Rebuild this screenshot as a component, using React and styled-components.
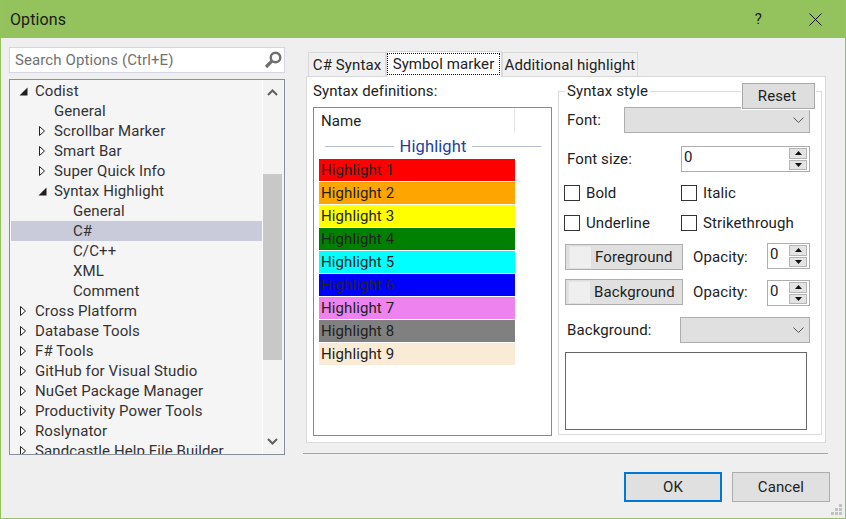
import React from 'react';
import styled, { createGlobalStyle } from 'styled-components';

const GlobalStyle = createGlobalStyle`
  html, body { margin: 0; padding: 0; background: #efefef; }
  * { box-sizing: border-box; }
`;

const treeItems = [
  { label: 'Codist', level: 0, arrow: 'open' },
  { label: 'General', level: 1 },
  { label: 'Scrollbar Marker', level: 1, arrow: 'closed' },
  { label: 'Smart Bar', level: 1, arrow: 'closed' },
  { label: 'Super Quick Info', level: 1, arrow: 'closed' },
  { label: 'Syntax Highlight', level: 1, arrow: 'open' },
  { label: 'General', level: 2 },
  { label: 'C#', level: 2, selected: true },
  { label: 'C/C++', level: 2 },
  { label: 'XML', level: 2 },
  { label: 'Comment', level: 2 },
  { label: 'Cross Platform', level: 0, arrow: 'closed' },
  { label: 'Database Tools', level: 0, arrow: 'closed' },
  { label: 'F# Tools', level: 0, arrow: 'closed' },
  { label: 'GitHub for Visual Studio', level: 0, arrow: 'closed' },
  { label: 'NuGet Package Manager', level: 0, arrow: 'closed' },
  { label: 'Productivity Power Tools', level: 0, arrow: 'closed' },
  { label: 'Roslynator', level: 0, arrow: 'closed' },
  { label: 'Sandcastle Help File Builder', level: 0, arrow: 'closed' },
];

const highlights = [
  ['Highlight 1', '#ff0000'],
  ['Highlight 2', '#ffa500'],
  ['Highlight 3', '#ffff00'],
  ['Highlight 4', '#008000'],
  ['Highlight 5', '#00ffff'],
  ['Highlight 6', '#0000ff'],
  ['Highlight 7', '#ee82ee'],
  ['Highlight 8', '#808080'],
  ['Highlight 9', '#faebd7'],
];

const TreeArrow = ({ type }) => {
  if (type === 'open') {
    return (
      <ArrowSlot>
        <svg width="9" height="9" viewBox="0 0 9 9"><path d="M8.5 0.5V8.5H0.5Z" fill="#1e1e1e" /></svg>
      </ArrowSlot>
    );
  }
  if (type === 'closed') {
    return (
      <ArrowSlot>
        <svg width="9" height="12" viewBox="0 0 9 12"><path d="M1.5 1.5L6.5 6L1.5 10.5Z" fill="#fff" stroke="#222" /></svg>
      </ArrowSlot>
    );
  }
  return <ArrowSlot />;
};

const Chevron = ({ up }) => (
  <svg width="11" height="7" viewBox="0 0 11 7">
    <path d={up ? 'M1 6L5.5 1.5L10 6' : 'M1 1L5.5 5.5L10 1'} fill="none" stroke="#5f5f5f" strokeWidth="2" />
  </svg>
);

const SelectBox = ({ width }) => (
  <Select $width={width}>
    <svg width="11" height="6" viewBox="0 0 11 6">
      <path d="M0.5 0.5L5.5 5.5L10.5 0.5" fill="none" stroke="#555" />
    </svg>
  </Select>
);

const Spinner = ({ width, shift }) => (
  <SpinInput $width={width} $shift={shift}>
    <SpinValue>0</SpinValue>
    <SpinButtons>
      <SpinButton>
        <svg width="7" height="4" viewBox="0 0 7 4"><path d="M0 4L3.5 0L7 4Z" fill="#111" /></svg>
      </SpinButton>
      <SpinButton>
        <svg width="7" height="4" viewBox="0 0 7 4"><path d="M0 0L3.5 4L7 0Z" fill="#111" /></svg>
      </SpinButton>
    </SpinButtons>
  </SpinInput>
);

const App = () => (
  <Window>
    <GlobalStyle />
    <TitleBar>
      <TitleText>Options</TitleText>
      <TitleButtons>
        <HelpGlyph>?</HelpGlyph>
        <svg width="13" height="13" viewBox="0 0 13 13">
          <path d="M0.5 0.5L12.5 12.5M12.5 0.5L0.5 12.5" stroke="#111" strokeWidth="1" />
        </svg>
      </TitleButtons>
    </TitleBar>
    <Main>
      <LeftColumn>
        <SearchBox>
          <SearchHint>Search Options (Ctrl+E)</SearchHint>
          <svg width="18" height="18" viewBox="0 0 18 18">
            <circle cx="11.5" cy="6.5" r="4.8" fill="none" stroke="#6f6f6f" strokeWidth="2.4" />
            <path d="M7.8 10.2L2 16" stroke="#6f6f6f" strokeWidth="3.2" />
          </svg>
        </SearchBox>
        <Tree>
          <TreeList>
            {treeItems.map((item, i) => (
              <TreeRow key={i} $level={item.level} $selected={item.selected}>
                <TreeArrow type={item.arrow} />
                {item.label}
              </TreeRow>
            ))}
          </TreeList>
          <ScrollBar>
            <ScrollCap $top><Chevron up /></ScrollCap>
            <ScrollThumb />
            <ScrollCap><Chevron /></ScrollCap>
          </ScrollBar>
        </Tree>
      </LeftColumn>

      <RightColumn>
        <Tabs>
          <Tab $width={78}>C# Syntax</Tab>
          <ActiveTab>
            <FocusRect>Symbol marker</FocusRect>
          </ActiveTab>
          <Tab $width={136}>Additional highlight</Tab>
        </Tabs>
        <Panel>
          <DefinitionsColumn>
            <PanelLabel>Syntax definitions:</PanelLabel>
            <ListBox>
              <ListHeader>
                <HeaderCell>Name</HeaderCell>
              </ListHeader>
              <GroupHeader>
                <GroupLine />
                <GroupName>Highlight</GroupName>
                <GroupLine />
              </GroupHeader>
              {highlights.map(([name, color]) => (
                <HighlightRow key={name} $color={color}>{name}</HighlightRow>
              ))}
            </ListBox>
          </DefinitionsColumn>

          <StyleColumn>
            <ResetButton>Reset</ResetButton>
            <StyleGroup>
              <GroupLegend>Syntax style</GroupLegend>
              <FieldRow $top={6}>
                <FieldLabel>Font:</FieldLabel>
                <SelectBox width={186} />
              </FieldRow>
              <FieldRow $top={13}>
                <FieldLabel>Font size:</FieldLabel>
                <Spinner width={129} />
              </FieldRow>
              <CheckGrid>
                <CheckItem><CheckBox />Bold</CheckItem>
                <CheckItem><CheckBox />Italic</CheckItem>
                <CheckItem><CheckBox />Underline</CheckItem>
                <CheckItem><CheckBox />Strikethrough</CheckItem>
              </CheckGrid>
              <ColorRow $top={11}>
                <ColorButton $inset={3}>
                  <Swatch $width={22} />
                  Foreground
                </ColorButton>
                <OpacityLabel>Opacity:</OpacityLabel>
                <Spinner width={43} shift={-1} />
              </ColorRow>
              <ColorRow $top={9}>
                <ColorButton $inset={2}>
                  <Swatch $width={22} />
                  Background
                </ColorButton>
                <OpacityLabel>Opacity:</OpacityLabel>
                <Spinner width={43} shift={1} />
              </ColorRow>
              <FieldRow $top={12}>
                <FieldLabel>Background:</FieldLabel>
                <SelectBox width={130} />
              </FieldRow>
              <PreviewBox />
            </StyleGroup>
          </StyleColumn>
        </Panel>
        <Separator />
        <Actions>
          <DialogButton $primary>OK</DialogButton>
          <DialogButton>Cancel</DialogButton>
        </Actions>
      </RightColumn>
    </Main>
    <ResizeGrip width="11" height="11" viewBox="0 0 11 11">
      <path d="M8 0h3v3H8zM4 4h3v3H4zM8 4h3v3H8zM0 8h3v3H0zM4 8h3v3H4zM8 8h3v3H8z" fill="#c2c2c2" />
    </ResizeGrip>
  </Window>
);

const Window = styled.div`
  position: relative;
  width: 846px;
  height: 519px;
  display: flex;
  flex-direction: column;
  background: #efefef;
  border: 1px solid #94c45c;
  border-top: 0;
  overflow: hidden;
  font-family: Roboto, "Liberation Sans", sans-serif;
  font-size: 15px;
  letter-spacing: 0.1px;
  color: #222;
`;

const TitleBar = styled.div`
  height: 38px;
  flex: none;
  margin: 0 -1px;
  padding: 0 24px 0 10px;
  display: flex;
  align-items: center;
  justify-content: space-between;
  background: #94c25c;
`;

const TitleText = styled.div`
  font-size: 16px;
  color: #1a1a1a;
`;

const TitleButtons = styled.div`
  display: flex;
  align-items: center;
  gap: 47px;
`;

const HelpGlyph = styled.span`
  font-size: 15px;
  color: #1a1a1a;
`;

const Main = styled.div`
  flex: 1;
  display: flex;
  padding: 9px 0 0 8px;
`;

const LeftColumn = styled.div`
  width: 276px;
  flex: none;
`;

const SearchBox = styled.div`
  height: 26px;
  display: flex;
  align-items: center;
  justify-content: space-between;
  padding: 0 2px 0 5px;
  background: #fff;
  border: 1px solid #d5d5e4;
`;

const SearchHint = styled.span`
  color: #717171;
`;

const Tree = styled.div`
  height: 376px;
  margin-top: 6px;
  display: flex;
  background: #f5f5f5;
  border: 1px solid #8a8f9c;
  overflow: hidden;
`;

const TreeList = styled.div`
  flex: 1;
  padding: 1px 0 0 1px;
  min-width: 0;
`;

const TreeRow = styled.div`
  height: 20px;
  display: flex;
  align-items: center;
  padding-left: ${p => 8 + p.$level * 19}px;
  white-space: nowrap;
  color: #333;
  background: ${p => (p.$selected ? '#c9cbdb' : 'transparent')};
`;

const ArrowSlot = styled.span`
  width: 16px;
  flex: none;
  display: flex;
  align-items: center;
`;

const ScrollBar = styled.div`
  width: 22px;
  flex: none;
  display: flex;
  flex-direction: column;
  border-left: 1px solid #fbfbfb;
  background: #f3f3f3;
`;

const ScrollCap = styled.div`
  height: ${p => (p.$top ? '24px' : '26px')};
  display: flex;
  align-items: center;
  justify-content: center;
  padding-right: 2px;
  margin-top: ${p => (p.$top ? '0' : 'auto')};
`;

const ScrollThumb = styled.div`
  height: 186px;
  width: 19px;
  margin-top: 70px;
  background: #c8c8c8;
`;

const RightColumn = styled.div`
  width: 527px;
  margin-left: 18px;
  padding-top: 4px;
`;

const Tabs = styled.div`
  height: 26px;
  margin-left: 3px;
  padding-left: 2px;
  display: flex;
  align-items: flex-end;
  position: relative;
  z-index: 1;
`;

const Tab = styled.div`
  width: ${p => p.$width}px;
  height: 24px;
  margin-bottom: 1px;
  display: flex;
  align-items: center;
  justify-content: center;
  background: #f0f0f0;
  border: 1px solid #d9d9d9;
  border-bottom: 0;
  color: #222;
`;

const ActiveTab = styled.div`
  width: 116px;
  height: 26px;
  padding: 1px 1px 0 0;
  background: #fff;
  border: 1px solid #d9d9d9;
  border-bottom: 0;
`;

const FocusRect = styled.div`
  height: 22px;
  display: flex;
  align-items: center;
  justify-content: center;
  border: 1px dotted #111;
  color: #222;
`;

const Panel = styled.div`
  height: 367px;
  width: 520px;
  margin: -1px 0 0 3px;
  padding: 4px 4px 0 6px;
  display: flex;
  gap: 6px;
  background: #fff;
  border: 1px solid #d9d9d9;
`;

const DefinitionsColumn = styled.div`
  width: 239px;
  flex: none;
`;

const PanelLabel = styled.div`
  height: 20px;
  line-height: 20px;
  color: #222;
`;

const ListBox = styled.div`
  height: 329px;
  margin-top: 6px;
  padding: 0 5px;
  border: 1px solid #858a94;
  background: #fff;
`;

const ListHeader = styled.div`
  height: 25px;
  display: flex;
`;

const HeaderCell = styled.div`
  width: 196px;
  padding-left: 2px;
  display: flex;
  align-items: center;
  border-right: 1px solid #e6e6e6;
  color: #222;
`;

const GroupHeader = styled.div`
  height: 26px;
  padding: 0 5px 0 6px;
  display: flex;
  align-items: center;
  gap: 6px;
`;

const GroupLine = styled.div`
  flex: 1;
  height: 1px;
  background: #b4bdd5;
`;

const GroupName = styled.div`
  color: #1f3f9c;
  font-size: 16.5px;
`;

const HighlightRow = styled.div`
  width: 196px;
  height: 22px;
  margin-bottom: 1px;
  padding-left: 2px;
  display: flex;
  align-items: center;
  background: ${p => p.$color};
  color: #222;
`;

const StyleColumn = styled.div`
  position: relative;
  width: 264px;
  flex: none;
`;

const ResetButton = styled.div`
  position: absolute;
  top: 2px;
  left: 184px;
  width: 73px;
  height: 26px;
  padding-right: 3px;
  display: flex;
  align-items: center;
  justify-content: center;
  background: #dedede;
  border: 1px solid #a9a9a9;
  box-shadow: 0 0 0 1px #fff;
  z-index: 1;
`;

const StyleGroup = styled.fieldset`
  margin: 0;
  height: 354px;
  padding: 0 11px 0 6px;
  border: 1px solid #dcdcdc;
  min-width: 0;
`;

const GroupLegend = styled.legend`
  padding: 0 2px;
  margin-left: 0;
  height: 20px;
  line-height: 20px;
  color: #222;
`;

const FieldRow = styled.div`
  height: 26px;
  margin-top: ${p => p.$top}px;
  display: flex;
  align-items: center;
  justify-content: space-between;
`;

const FieldLabel = styled.span`
  padding-left: 2px;
  color: #222;
`;

const Select = styled.div`
  width: ${p => p.$width}px;
  height: 26px;
  padding-right: 5px;
  display: flex;
  align-items: center;
  justify-content: flex-end;
  background: #e0e0e0;
  border: 1px solid #adadad;
`;

const SpinInput = styled.div`
  width: ${p => p.$width}px;
  height: 26px;
  margin-top: ${p => (p.$shift || 0) * 2}px;
  padding: 1px 2px 1px 2px;
  display: flex;
  justify-content: space-between;
  background: #fff;
  border: 1px solid #adadad;
`;

const SpinValue = styled.span`
  line-height: 18px;
  color: #222;
`;

const SpinButtons = styled.div`
  width: 18px;
  display: flex;
  flex-direction: column;
  gap: 1px;
`;

const SpinButton = styled.div`
  flex: 1;
  display: flex;
  align-items: center;
  justify-content: center;
  background: #e3e3e3;
  border: 1px solid #b5b5b5;
`;

const CheckGrid = styled.div`
  margin-top: 11px;
  display: grid;
  grid-template-columns: 116px 1fr;
  grid-auto-rows: 20px;
  row-gap: 10px;
`;

const CheckItem = styled.label`
  display: flex;
  align-items: center;
  gap: 6px;
  margin-left: -1px;
  color: #222;
  &:nth-child(even) { margin-left: 0; }
`;

const CheckBox = styled.span`
  width: 16px;
  height: 16px;
  flex: none;
  background: #fff;
  border: 1px solid #333;
`;

const ColorRow = styled.div`
  height: 26px;
  margin-top: ${p => p.$top}px;
  display: flex;
  align-items: center;
`;

const ColorButton = styled.div`
  width: 118px;
  height: 26px;
  padding-left: ${p => p.$inset}px;
  display: flex;
  align-items: center;
  gap: 4px;
  background: #e0e0e0;
  border: 1px solid #adadad;
  color: #222;
`;

const Swatch = styled.span`
  width: ${p => p.$width}px;
  height: 22px;
  background: #efefef;
  border-top: 1px solid #e4e4e4;
  border-left: 1px solid #e4e4e4;
`;

const OpacityLabel = styled.span`
  margin: 0 auto 0 10px;
  color: #222;
`;

const PreviewBox = styled.div`
  width: 242px;
  height: 78px;
  margin-top: 9px;
  background: #fff;
  border: 1px solid #666;
`;

const Separator = styled.div`
  width: 525px;
  margin-top: 10px;
  height: 1px;
  background: #a6a6a6;
`;

const Actions = styled.div`
  margin-top: 18px;
  display: flex;
  justify-content: flex-end;
  gap: 10px;
`;

const DialogButton = styled.div`
  width: 98px;
  height: 30px;
  display: flex;
  align-items: center;
  justify-content: center;
  background: #e0e0e0;
  border: ${p => (p.$primary ? '2px solid #0078d7' : '1px solid #adadad')};
  color: #222;
`;

const ResizeGrip = styled.svg`
  position: absolute;
  right: 3px;
  bottom: 3px;
`;

export default App;
